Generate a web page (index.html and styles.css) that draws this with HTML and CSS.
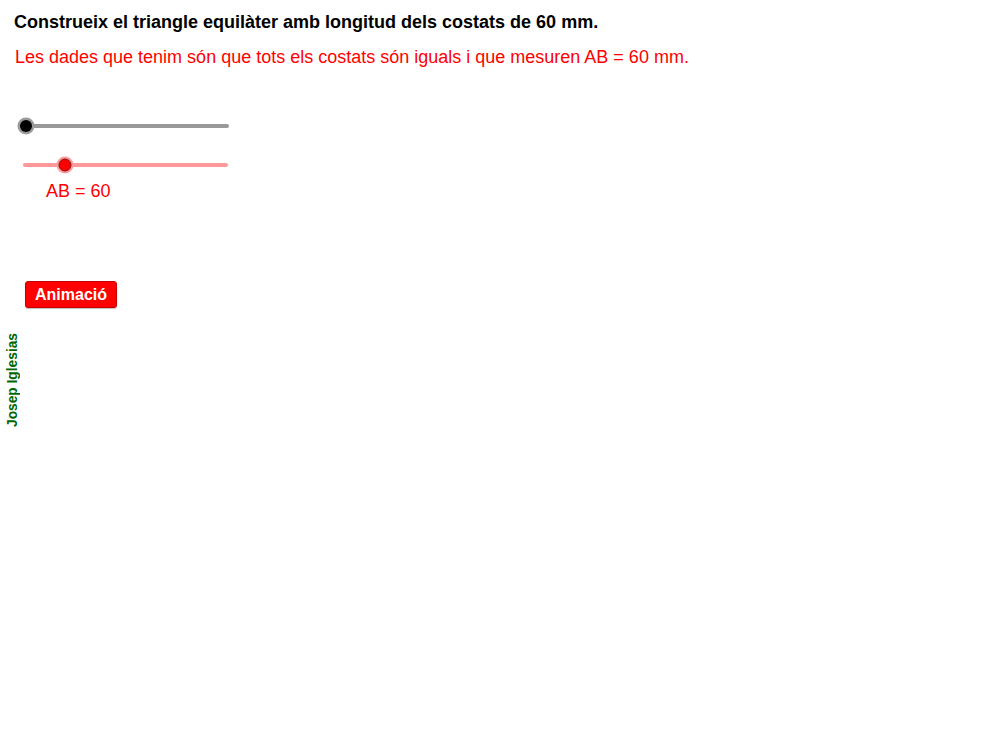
FILE: index.html
```html
<!DOCTYPE html>
<html lang="ca">
<head>
<meta charset="utf-8">
<title>Triangle equilàter</title>
<link rel="stylesheet" href="styles.css">
</head>
<body>
<div class="canvas">
  <p class="title">Construeix el triangle equilàter amb longitud dels costats de 60 mm.</p>
  <p class="given">Les dades que tenim són que tots els costats són iguals i que mesuren AB = 60 mm.</p>
  <svg class="sliders" width="240" height="70" viewBox="0 0 240 70">
    <line x1="26" y1="16" x2="227" y2="16" stroke="#999999" stroke-width="4" stroke-linecap="round"/>
    <circle cx="26" cy="16" r="8.5" fill="#9a9a9a"/>
    <circle cx="26" cy="16" r="6" fill="#000000"/>
    <line x1="25" y1="55" x2="226" y2="55" stroke="#ff9999" stroke-width="4" stroke-linecap="round"/>
    <circle cx="65" cy="55" r="8.5" fill="#ff9999"/>
    <circle cx="65" cy="55" r="6" fill="#ff0000" stroke="#7a1a1a" stroke-width="1"/>
  </svg>
  <p class="ab">AB = 60</p>
  <button class="anim" type="button">Animació</button>
  <div class="author">Josep Iglesias</div>
</div>
</body>
</html>
```
FILE: styles.css
```css
html, body {
  margin: 0;
  padding: 0;
  background: #ffffff;
}
.canvas {
  position: relative;
  width: 1007px;
  height: 741px;
  font-family: "Liberation Sans", Arial, sans-serif;
}
.title {
  margin: 0;
  padding: 11px 0 0 14px;
  font-size: 18px;
  line-height: 22px;
  font-weight: bold;
  color: #000000;
}
.given {
  margin: 13px 0 0 0;
  padding-left: 15px;
  font-size: 18px;
  line-height: 22px;
  color: #ff0000;
}
.sliders {
  display: block;
  margin-top: 42px;
}
.ab {
  margin: 0;
  padding-left: 46px;
  font-size: 18px;
  line-height: 22px;
  color: #ff0000;
}
.anim {
  display: block;
  margin: 79px 0 0 25px;
  width: 92px;
  height: 27px;
  padding: 0;
  background: #ff0000;
  border: 1px solid #c40000;
  border-radius: 3px;
  box-shadow: 0 1px 1px rgba(0,0,0,0.25);
  color: #ffffff;
  font-family: "Liberation Sans", Arial, sans-serif;
  font-size: 16px;
  font-weight: bold;
  line-height: 25px;
}
.author {
  position: absolute;
  left: 6px;
  top: 333px;
  writing-mode: vertical-rl;
  transform: rotate(180deg);
  font-size: 13.75px;
  line-height: 14px;
  font-weight: bold;
  color: #006600;
}
```
